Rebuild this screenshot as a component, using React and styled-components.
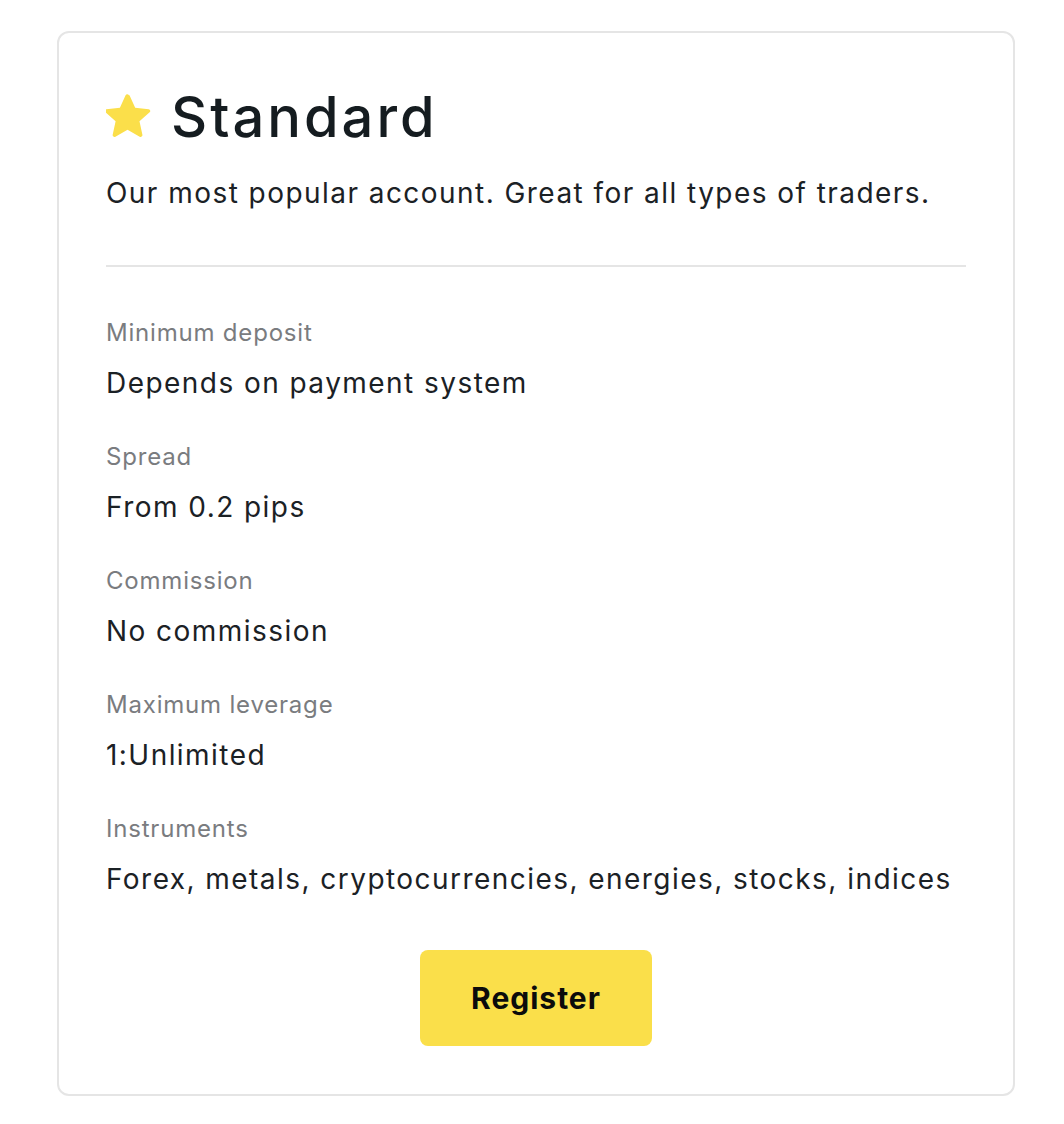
import styled, { createGlobalStyle } from "styled-components";

const GlobalStyle = createGlobalStyle`
    body {
        margin: 0;
        background: #ffffff;
        font-family: Inter, "Noto Sans", sans-serif;
        color: #1b2125;
    }
`

const Card = styled.div`
    box-sizing: border-box;
    width: 958px;
    margin: 31px 0 0 57px;
    padding: 50px 47px 48px 47px;
    border: 2px solid #e5e5e5;
    border-radius: 12px;
    display: flex;
    flex-direction: column;
`

const Title = styled.h2`
    display: flex;
    align-items: center;
    gap: 18px;
    margin: 0;
    font-size: 56px;
    line-height: 68px;
    font-weight: 500;
    letter-spacing: 3px;
    color: #151c20;
`

const Description = styled.p`
    margin: 24px 0 0;
    font-size: 28px;
    line-height: 36px;
    letter-spacing: 1.45px;
`

const Divider = styled.hr`
    margin: 54px 0 50px;
    border: none;
    height: 2px;
    background: #e5e5e5;
`

const Specs = styled.dl`
    display: flex;
    flex-direction: column;
    gap: 40px;
    margin: 0;
`

const Spec = styled.div`
    display: flex;
    flex-direction: column;
    gap: 16px;
`

const Label = styled.dt`
    font-size: 24px;
    line-height: 32px;
    letter-spacing: 0.8px;
    color: #7a7c7f;
`

const Value = styled.dd`
    margin: 0;
    font-size: 28px;
    line-height: 36px;
    letter-spacing: 1.45px;
`

const Register = styled.button`
    align-self: center;
    margin-top: 53px;
    width: 232px;
    height: 96px;
    border: none;
    border-radius: 8px;
    background: #fadf4a;
    font-family: Inter, "Noto Sans", sans-serif;
    font-size: 30px;
    font-weight: 700;
    letter-spacing: 1px;
    color: #0b0b0b;
    cursor: pointer;
`

const Star = () => (
    <svg width="47" height="45" viewBox="0 0 24 23" style={{ marginTop: "-4px" }}>
        <path
            d="M12 1.2l2.9 6.4 6.9.7c.8.1 1.1 1.1.5 1.6l-5.2 4.6 1.5 6.8c.2.8-.7 1.4-1.4 1l-6.2-3.5-6.2 3.5c-.7.4-1.6-.2-1.4-1l1.5-6.8-5.2-4.6c-.6-.5-.3-1.5.5-1.6l6.9-.7 2.9-6.4c.3-.7 1.4-.7 1.7 0z"
            fill="#fbdf4a"
        />
    </svg>
)

const specs = [
    ["Minimum deposit", "Depends on payment system"],
    ["Spread", "From 0.2 pips"],
    ["Commission", "No commission"],
    ["Maximum leverage", "1:Unlimited"],
    ["Instruments", "Forex, metals, cryptocurrencies, energies, stocks, indices"],
]

export default function App() {
    return (
        <>
            <GlobalStyle />
            <Card>
                <Title>
                    <Star />
                    Standard
                </Title>
                <Description>Our most popular account. Great for all types of traders.</Description>
                <Divider />
                <Specs>
                    {specs.map(([label, value]) => (
                        <Spec key={label}>
                            <Label>{label}</Label>
                            <Value>{value}</Value>
                        </Spec>
                    ))}
                </Specs>
                <Register>Register</Register>
            </Card>
        </>
    )
}
